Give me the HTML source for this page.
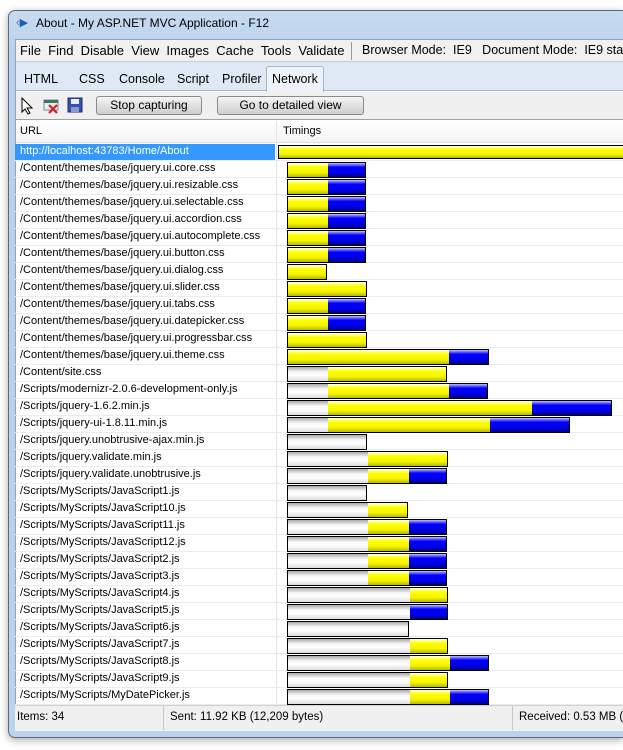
<!DOCTYPE html><html><head><style>
*{margin:0;padding:0;box-sizing:border-box}
body{width:623px;height:750px;background:#fff;position:relative;overflow:hidden;font-family:"Liberation Sans",sans-serif;font-size:12px;color:#000}
.a{position:absolute}
.frame{left:8px;top:10px;width:615px;height:728px;border:1px solid #5a6b80;border-right:none;border-radius:7px 0 0 7px;background:linear-gradient(#c8dcf1,#b9d1ea 40px,#bcd3ec);box-shadow:0 2px 8px rgba(0,0,0,.35)}
.row{position:absolute;left:15px;width:608px;height:17px;border-bottom:1px solid #ececec}
.row span{position:absolute;left:5px;top:1px;font-size:11px;white-space:nowrap}
.bar{position:absolute;top:1px;height:15px;border:1px solid #000;display:flex;overflow:hidden}
.g{background:linear-gradient(#aaa,#f6f6f6 35%,#fff 60%,#ddd)}
.y{background:linear-gradient(#fffff0,#ffff00 30%,#f2f200 70%,#b8b800)}
.b{background:linear-gradient(#c0c0ff,#0000ff 30%,#0000e6 70%,#00008a)}
.btn{position:absolute;top:96px;height:19px;border:1px solid #8a8a8a;border-radius:3px;background:linear-gradient(#f6f6f6,#e0e0e0 50%,#cfcfcf);font-size:12px;text-align:center;line-height:17px}
</style></head><body>
<div class="a frame"></div>
<div class="a" style="left:16px;top:16px;font-size:11px;color:#4a6fb0">&lsaquo;<span style="color:#1a5fb0">&#x25B6;</span></div>
<div class="a" style="left:36px;top:16px;font-size:12px;white-space:nowrap">About - My ASP.NET MVC Application - F12</div>
<div class="a" style="left:15px;top:39px;width:608px;height:666px;background:#fff;border-top:1px solid #8ea3bc;border-left:1px solid #8ea3bc"></div>
<div class="a" style="left:16px;top:40px;width:607px;height:22px;background:#f1f1f1;border-bottom:1px solid #c5cfdb"></div>
<div class="a" style="left:20px;top:43px;font-size:13px;white-space:nowrap">File&nbsp; Find&nbsp; Disable&nbsp; View&nbsp; Images&nbsp; Cache&nbsp; Tools&nbsp; Validate</div>
<div class="a" style="left:351px;top:42px;width:1px;height:18px;background:#999"></div>
<div class="a" style="left:362px;top:43px;font-size:12.5px;white-space:nowrap">Browser Mode:&nbsp; IE9&nbsp;&nbsp; Document Mode:&nbsp; IE9 standa</div>
<div class="a" style="left:16px;top:62px;width:607px;height:29px;background:#dfe9f6;border-bottom:1px solid #aab8c8"></div>
<div class="a" style="left:266px;top:66px;width:58px;height:26px;background:#eef3fa;border:1px solid #aab8c8;border-bottom:none;border-radius:3px 3px 0 0"></div>
<div class="a" style="left:24px;top:72px;font-size:12.5px">HTML</div>
<div class="a" style="left:79px;top:72px;font-size:12.5px">CSS</div>
<div class="a" style="left:119px;top:72px;font-size:12.5px">Console</div>
<div class="a" style="left:177px;top:72px;font-size:12.5px">Script</div>
<div class="a" style="left:222px;top:72px;font-size:12.5px">Profiler</div>
<div class="a" style="left:272px;top:72px;font-size:12.5px">Network</div>
<div class="a" style="left:16px;top:92px;width:607px;height:28px;background:#f0f0f0;border-bottom:1px solid #a0a0a0"></div>
<svg class="a" style="left:20px;top:97px" width="16" height="18"><path d="M2 1 L2 15 L5 12 L8 17 L10 16 L7 11 L12 11 Z" fill="#fff" stroke="#000"/></svg>
<svg class="a" style="left:43px;top:97px" width="18" height="18"><rect x="1" y="3" width="14" height="10" fill="#e8eef4" stroke="#7a8a9a"/><rect x="1" y="3" width="14" height="3" fill="#3a7a5a"/><path d="M6 8 L14 16 M14 8 L6 16" stroke="#d02020" stroke-width="2.2"/></svg>
<svg class="a" style="left:67px;top:97px" width="16" height="16"><rect x="1" y="1" width="14" height="14" fill="#3a4fb0" stroke="#1a2a70"/><rect x="4" y="2" width="8" height="5" fill="#e8eef8"/><rect x="4" y="10" width="8" height="5" fill="#8a9ad0"/></svg>
<div class="btn" style="left:96px;width:106px">Stop capturing</div>
<div class="btn" style="left:217px;width:147px">Go to detailed view</div>
<div class="a" style="left:16px;top:121px;width:607px;height:22px;background:linear-gradient(#fff,#f4f4f4);border-bottom:1px solid #e0e0e0"></div>
<div class="a" style="left:20px;top:125px;font-size:11px">URL</div>
<div class="a" style="left:283px;top:125px;font-size:11px">Timings</div>
<div class="a" style="left:276px;top:121px;width:1px;height:584px;background:#e4e4e4"></div>
<div class="a" style="left:15px;top:144px;width:260px;height:16px;background:#3399ff"></div>
<div id="rows"></div>
<div class="a" style="left:15px;top:705px;width:608px;height:26px;background:#f0f0f0;border-top:1px solid #d0d0d0"></div>
<div class="a" style="left:17px;top:711px;font-size:11.5px">Items: 34</div>
<div class="a" style="left:163px;top:706px;width:1px;height:24px;background:#c8c8c8"></div>
<div class="a" style="left:170px;top:711px;font-size:11.5px">Sent: 11.92 KB (12,209 bytes)</div>
<div class="a" style="left:512px;top:706px;width:1px;height:24px;background:#c8c8c8"></div>
<div class="a" style="left:519px;top:711px;font-size:11.5px;white-space:nowrap">Received: 0.53 MB (5</div>
<script>
var R=[
["http://localhost:43783/Home/About",[[278,"y",626]]],
["/Content/themes/base/jquery.ui.core.css",[[287,"y",327],[327,"b",366]]],
["/Content/themes/base/jquery.ui.resizable.css",[[287,"y",327],[327,"b",366]]],
["/Content/themes/base/jquery.ui.selectable.css",[[287,"y",327],[327,"b",366]]],
["/Content/themes/base/jquery.ui.accordion.css",[[287,"y",327],[327,"b",366]]],
["/Content/themes/base/jquery.ui.autocomplete.css",[[287,"y",327],[327,"b",366]]],
["/Content/themes/base/jquery.ui.button.css",[[287,"y",327],[327,"b",366]]],
["/Content/themes/base/jquery.ui.dialog.css",[[287,"y",327]]],
["/Content/themes/base/jquery.ui.slider.css",[[287,"y",367]]],
["/Content/themes/base/jquery.ui.tabs.css",[[287,"y",327],[327,"b",366]]],
["/Content/themes/base/jquery.ui.datepicker.css",[[287,"y",327],[327,"b",366]]],
["/Content/themes/base/jquery.ui.progressbar.css",[[287,"y",367]]],
["/Content/themes/base/jquery.ui.theme.css",[[287,"y",448],[448,"b",489]]],
["/Content/site.css",[[287,"g",327],[327,"y",447]]],
["/Scripts/modernizr-2.0.6-development-only.js",[[287,"g",327],[327,"y",448],[448,"b",488]]],
["/Scripts/jquery-1.6.2.min.js",[[287,"g",327],[327,"y",531],[531,"b",612]]],
["/Scripts/jquery-ui-1.8.11.min.js",[[287,"g",327],[327,"y",489],[489,"b",570]]],
["/Scripts/jquery.unobtrusive-ajax.min.js",[[287,"g",367]]],
["/Scripts/jquery.validate.min.js",[[287,"g",367],[367,"y",448]]],
["/Scripts/jquery.validate.unobtrusive.js",[[287,"g",367],[367,"y",408],[408,"b",447]]],
["/Scripts/MyScripts/JavaScript1.js",[[287,"g",367]]],
["/Scripts/MyScripts/JavaScript10.js",[[287,"g",367],[367,"y",408]]],
["/Scripts/MyScripts/JavaScript11.js",[[287,"g",367],[367,"y",408],[408,"b",447]]],
["/Scripts/MyScripts/JavaScript12.js",[[287,"g",367],[367,"y",408],[408,"b",447]]],
["/Scripts/MyScripts/JavaScript2.js",[[287,"g",367],[367,"y",408],[408,"b",447]]],
["/Scripts/MyScripts/JavaScript3.js",[[287,"g",367],[367,"y",408],[408,"b",447]]],
["/Scripts/MyScripts/JavaScript4.js",[[287,"g",409],[409,"y",448]]],
["/Scripts/MyScripts/JavaScript5.js",[[287,"g",409],[409,"b",448]]],
["/Scripts/MyScripts/JavaScript6.js",[[287,"g",409]]],
["/Scripts/MyScripts/JavaScript7.js",[[287,"g",409],[409,"y",448]]],
["/Scripts/MyScripts/JavaScript8.js",[[287,"g",409],[409,"y",449],[449,"b",489]]],
["/Scripts/MyScripts/JavaScript9.js",[[287,"g",409],[409,"y",448]]],
["/Scripts/MyScripts/MyDatePicker.js",[[287,"g",409],[409,"y",449],[449,"b",489]]]];
var h="";
R.forEach(function(r,i){var t=144+i*17;
h+='<div class="row" style="top:'+t+'px"><span style="'+(i==0?'color:#fff':'')+'">'+r[0]+'</span></div>';
var s=r[1][0][0],e=r[1][r[1].length-1][2];if(e>623)e=623;
h+='<div class="bar" style="left:'+s+'px;top:'+(t+1)+'px;width:'+(e-s)+'px;height:'+(i==0?14:16)+'px'+(i==0?';border-right:none':'')+'">';
r[1].forEach(function(p){h+='<div class="'+p[1]+'" style="width:'+(Math.min(p[2],623)-p[0])+'px;flex:none"></div>'});
h+='</div>';});
document.getElementById("rows").outerHTML=h;
</script>
</body></html>
